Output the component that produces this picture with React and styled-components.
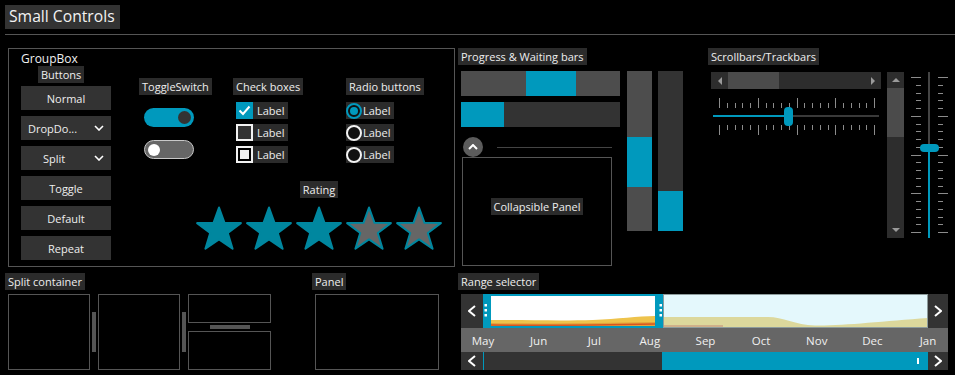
import styled, { createGlobalStyle } from 'styled-components';

const TEAL = '#0099bd';
const STAR = '#00879f';

const GlobalStyle = createGlobalStyle`
  html, body { margin: 0; padding: 0; background: #000; }
  body {
    font-family: "Open Sans", "Noto Sans", sans-serif;
    font-size: 11px;
    color: #eee;
  }
`;

const Page = styled.div`
  width: 955px;
  height: 375px;
  overflow: hidden;
  background: #000;
`;

const Header = styled.header`
  display: flex;
  padding: 5px 0 0 5px;
`;

const Title = styled.h1`
  margin: 0;
  height: 24px;
  line-height: 23px;
  padding: 0 5px 0 4px;
  font-size: 15.7px;
  font-weight: 400;
  background: #333;
  color: #f2f2f2;
`;

const Rule = styled.div`
  margin: 5px 0 0 5px;
  height: 1px;
  background: #555;
`;

const Row = styled.div`
  display: flex;
  align-items: flex-start;
  margin-top: ${(p) => p.$mt}px;
  height: ${(p) => (p.$h ? `${p.$h}px` : 'auto')};
`;

const Section = styled.section`
  display: flex;
  flex-direction: column;
  margin-left: ${(p) => p.$ml}px;
  width: ${(p) => (p.$w ? `${p.$w}px` : 'auto')};
`;

const Caption = styled.span`
  align-self: ${(p) => (p.$center ? 'center' : 'flex-start')};
  height: 17px;
  line-height: 17px;
  padding: 0 3px;
  margin-left: ${(p) => p.$indent || 0}px;
  background: #2b2b2b;
  color: #eee;
  font-size: 11px;
  white-space: nowrap;
`;

/* ---------- group box ---------- */

const GroupBox = styled.fieldset`
  box-sizing: border-box;
  display: flex;
  flex-direction: column;
  width: 447px;
  height: 219px;
  margin: 0 0 0 8px;
  padding: 2px 0 0 12px;
  border: 1px solid #555;
  min-width: 0;
`;

const GroupTitle = styled.div`
  height: 15px;
  line-height: 15px;
  font-size: 12px;
  color: #f0f0f0;
`;

const GroupBody = styled.div`
  display: flex;
`;

const ButtonsCol = styled.div`
  display: flex;
  flex-direction: column;
  width: 90px;
`;

const ButtonStack = styled.div`
  display: flex;
  flex-direction: column;
  gap: 6px;
  margin-top: 3px;
`;

const Button = styled.button`
  display: flex;
  align-items: center;
  justify-content: ${(p) => p.$justify || 'center'};
  height: 24px;
  padding: ${(p) => (p.$pad ? '0 7px' : '0')};
  border: none;
  background: #333;
  color: #eee;
  font-family: inherit;
  font-size: 11px;
`;

const SplitMain = styled.span`
  flex: 1;
  text-align: center;
`;

const SplitArrow = styled.span`
  display: flex;
  justify-content: center;
  width: 24px;
`;

const Chevron = ({ dir = 'down', w = 10, h = 6, sw = 1.6 }) => {
  const pts = {
    down: `1,1 ${w / 2},${h - 1} ${w - 1},1`,
    up: `1,${h - 1} ${w / 2},1 ${w - 1},${h - 1}`,
    left: `${w - 1},1 1,${h / 2} ${w - 1},${h - 1}`,
    right: `1,1 ${w - 1},${h / 2} 1,${h - 1}`,
  }[dir];
  return (
    <svg width={w} height={h} viewBox={`0 0 ${w} ${h}`}>
      <polyline points={pts} fill="none" stroke="#fff" strokeWidth={sw} />
    </svg>
  );
};

const RightArea = styled.div`
  display: flex;
  flex-direction: column;
  margin-left: 28px;
`;

const Controls = styled.div`
  display: flex;
  margin-top: 12px;
`;

const ControlCol = styled.div`
  display: flex;
  flex-direction: column;
  width: ${(p) => (p.$w ? `${p.$w}px` : 'auto')};
`;

const ToggleStack = styled.div`
  display: flex;
  flex-direction: column;
  gap: 13px;
  margin: 13px 0 0 5px;
`;

const Toggle = styled.div`
  box-sizing: border-box;
  display: flex;
  align-items: center;
  justify-content: ${(p) => (p.$on ? 'flex-end' : 'flex-start')};
  width: 50px;
  height: 19px;
  padding: 0 3px;
  border-radius: 10px;
  background: ${(p) => (p.$on ? TEAL : '#666')};
  border: ${(p) => (p.$on ? 'none' : '1.5px solid #c8c8c8')};
`;

const Knob = styled.span`
  width: ${(p) => (p.$on ? 13 : 12)}px;
  height: ${(p) => (p.$on ? 13 : 12)}px;
  border-radius: 50%;
  background: ${(p) => (p.$on ? '#333' : '#fff')};
`;

const ItemStack = styled.div`
  display: flex;
  flex-direction: column;
  align-items: flex-start;
  gap: 5px;
  margin: 7px 0 0 ${(p) => p.$ml || 0}px;
`;

const Item = styled.label`
  display: flex;
  align-items: center;
  gap: ${(p) => p.$gap}px;
  height: 17px;
  padding-right: 3px;
  background: #2b2b2b;
  color: #eee;
  font-size: 11px;
`;

const CheckBox = styled.span`
  box-sizing: border-box;
  display: flex;
  align-items: center;
  justify-content: center;
  width: 17px;
  height: 17px;
  background: ${(p) => (p.$state === 'on' ? TEAL : '#333')};
  border: ${(p) => (p.$state === 'on' ? 'none' : '2px solid #f2f2f2')};
`;

const Indeterminate = styled.span`
  width: 9px;
  height: 9px;
  background: #f2f2f2;
  outline: 2px solid #000;
`;

const Radio = styled.span`
  box-sizing: border-box;
  display: flex;
  align-items: center;
  justify-content: center;
  width: 16px;
  height: 16px;
  border-radius: 50%;
  border: 2px solid ${(p) => (p.$on ? TEAL : '#f2f2f2')};
  background: #111;
`;

const RadioDot = styled.span`
  width: 8px;
  height: 8px;
  border-radius: 50%;
  background: ${TEAL};
`;

const Rating = styled.div`
  display: flex;
  flex-direction: column;
  align-items: center;
  width: 246px;
  margin: 18px 0 0 57px;
`;

const Stars = styled.div`
  display: flex;
  gap: 2px;
  margin-top: 8px;
`;

const Star = ({ filled }) => (
  <svg width="48" height="45" viewBox="0 0 48 45">
    <polygon
      points="24,1.5 29.5,16.8 45.9,17.1 32.8,27 37.6,42.8 24,33.4 10.4,42.8 15.2,27 2.1,17.1 18.5,16.8"
      fill={filled ? STAR : '#666'}
      stroke={STAR}
      strokeWidth="2"
      strokeLinejoin="round"
    />
  </svg>
);

/* ---------- progress ---------- */

const SectionBody = styled.div`
  display: flex;
  margin: ${(p) => p.$mt}px 0 0 3px;
`;

const ProgressCol = styled.div`
  display: flex;
  flex-direction: column;
  width: 159px;
`;

const Bar = styled.div`
  display: flex;
  width: 159px;
  height: 25px;
  margin-bottom: 6px;
  background: ${(p) => p.$bg};
`;

const BarFill = styled.div`
  width: ${(p) => p.$w}px;
  margin-left: ${(p) => p.$off || 0}px;
  background: ${TEAL};
`;

const CollapseRow = styled.div`
  display: flex;
  align-items: center;
  width: 151px;
  height: 20px;
  margin-top: 4px;
`;

const CircleBtn = styled.span`
  display: flex;
  align-items: center;
  justify-content: center;
  width: 20px;
  height: 20px;
  margin-left: 2px;
  border-radius: 50%;
  background: #5c5c5c;
`;

const CollapseLine = styled.span`
  flex: 1;
  height: 1px;
  margin-left: 14px;
  background: #444;
`;

const CollapsePanel = styled.div`
  box-sizing: border-box;
  display: flex;
  align-items: center;
  justify-content: center;
  width: 150px;
  height: 109px;
  margin-left: 1px;
  padding-bottom: 10px;
  border: 1px solid #555;
`;

const VBars = styled.div`
  display: flex;
  gap: 6px;
  margin-left: 7px;
`;

const VBar = styled.div`
  display: flex;
  flex-direction: column;
  width: 25px;
  height: 160px;
  background: ${(p) => p.$bg};
`;

const VFill = styled.div`
  height: ${(p) => p.$h}px;
  margin-top: ${(p) => p.$off}px;
  background: ${TEAL};
`;

/* ---------- scrollbars & trackbars ---------- */

const TrackCol = styled.div`
  display: flex;
  flex-direction: column;
  width: 170px;
`;

const HScroll = styled.div`
  display: flex;
  height: 17px;
  background: #2d2d2d;
`;

const VScroll = styled.div`
  display: flex;
  flex-direction: column;
  width: 17px;
  height: 166px;
  margin-left: 6px;
  background: #2d2d2d;
`;

const ArrowBox = styled.span`
  display: flex;
  align-items: center;
  justify-content: center;
  flex: 0 0 ${(p) => p.$size}px;
`;

const Tri = styled.span`
  width: 0;
  height: 0;
  border: 4px solid transparent;
  ${(p) => (p.$dir === 'left' ? 'border-right: 4px solid #9a9a9a; border-left-width: 0;' : '')}
  ${(p) => (p.$dir === 'right' ? 'border-left: 4px solid #9a9a9a; border-right-width: 0;' : '')}
  ${(p) => (p.$dir === 'up' ? 'border-bottom: 4px solid #9a9a9a; border-top-width: 0;' : '')}
  ${(p) => (p.$dir === 'down' ? 'border-top: 4px solid #9a9a9a; border-bottom-width: 0;' : '')}
`;

const ScrollThumb = styled.span`
  flex: 0 0 ${(p) => p.$size}px;
  background: #4b4b4b;
`;

const Spacer = styled.span`
  flex: 1;
`;

const HTrack = styled.div`
  position: relative;
  height: 40px;
  margin-top: 7px;
`;

const TickRow = styled.div`
  display: flex;
  justify-content: space-between;
  align-items: ${(p) => (p.$bottom ? 'flex-start' : 'flex-end')};
  height: 10px;
  margin: ${(p) => (p.$bottom ? 8 : 2)}px 6px 0 8px;
`;

const HTick = styled.span`
  width: 1px;
  height: ${(p) => (p.$major ? 10 : 5)}px;
  background: #8c8c8c;
`;

const HLine = styled.div`
  height: 2px;
  margin: 7px 2px 0;
  background: linear-gradient(to right, ${TEAL} 0 ${(p) => p.$value}px, #3a3a3a ${(p) => p.$value}px);
`;

const HThumb = styled.span`
  position: absolute;
  left: 73px;
  top: 11px;
  width: 9px;
  height: 19px;
  border-radius: 4px;
  background: ${TEAL};
`;

const VTrack = styled.div`
  position: relative;
  display: flex;
  width: 42px;
  height: 166px;
  margin-left: 5px;
`;

const TickCol = styled.div`
  display: flex;
  flex-direction: column;
  justify-content: space-between;
  align-items: ${(p) => (p.$right ? 'flex-start' : 'flex-end')};
  width: 10px;
  padding: 5px 0;
  margin-left: ${(p) => (p.$right ? 8 : 2)}px;
`;

const VTick = styled.span`
  height: 1px;
  width: ${(p) => (p.$major ? 10 : 5)}px;
  background: #8c8c8c;
`;

const VLine = styled.div`
  width: 2px;
  margin-left: 7px;
  background: linear-gradient(to bottom, #444 0 ${(p) => p.$value}px, ${TEAL} ${(p) => p.$value}px);
`;

const VThumb = styled.span`
  position: absolute;
  left: 11px;
  top: 72px;
  width: 19px;
  height: 8px;
  border-radius: 4px;
  background: ${TEAL};
`;

const ticks = Array.from({ length: 21 }, (_, i) => i % 5 === 0);

/* ---------- bottom row ---------- */

const PaneRow = styled.div`
  display: flex;
  margin: 4px 0 0 3px;
`;

const Pane = styled.div`
  box-sizing: border-box;
  width: ${(p) => p.$w}px;
  height: ${(p) => p.$h}px;
  border: 1px solid #555;
`;

const VSplitter = styled.span`
  align-self: center;
  width: 4px;
  height: 40px;
  margin: 0 2px;
  background: #555;
`;

const PaneStack = styled.div`
  display: flex;
  flex-direction: column;
  align-items: center;
`;

const HSplitter = styled.span`
  width: 40px;
  height: 4px;
  margin: 2px 0;
  background: #555;
`;

const RangeBox = styled.div`
  display: flex;
  flex-direction: column;
  width: 487px;
  margin: 4px 0 0 3px;
`;

const RangeLine = styled.div`
  display: flex;
  height: ${(p) => p.$h}px;
`;

const NavBtn = styled.span`
  display: flex;
  align-items: center;
  justify-content: center;
  flex: 0 0 ${(p) => p.$w}px;
  background: #333;
`;

const MonthRow = styled.div`
  display: flex;
  height: 24px;
  padding: 0 20px 0 22px;
  background: #666;
`;

const MonthTrack = styled.div`
  flex: 1;
  display: flex;
  align-items: center;
  justify-content: space-between;
`;

const Month = styled.span`
  display: flex;
  justify-content: center;
  width: 0;
  white-space: nowrap;
  font-size: 11.5px;
  color: #f0f0f0;
`;

const RangeTrack = styled.div`
  display: flex;
  flex: 0 0 445px;
  box-sizing: border-box;
  border-left: 1px solid ${TEAL};
  background: #333;
`;

const RangeFill = styled.div`
  position: relative;
  margin-left: 178px;
  flex: 1;
  background: ${TEAL};
`;

const RangeMark = styled.span`
  position: absolute;
  left: 255px;
  top: 6px;
  width: 2px;
  height: 6px;
  background: #fff;
`;

const RangeChart = () => (
  <svg width="445" height="34" viewBox="0 0 445 34" style={{ display: 'block' }}>
    <rect x="0" y="0" width="445" height="34" fill="#e4f8fc" />
    <path
      d="M180,34 L180,23 L285,23 C300,23 312,31 332,31.5 C360,32 400,27 445,24 L445,34 Z"
      fill="#dcd89c"
    />
    <rect x="180" y="31" width="60" height="3" fill="#cfb08a" />
    <rect x="180.5" y="0.5" width="264" height="33" fill="none" stroke="#8d9c9c" />
    <rect x="0" y="0" width="180" height="34" fill="#fff" />
    <path
      d="M8,34 L8,26 C40,26 80,27 110,26 C135,25 155,22 172,22 L172,34 Z"
      fill="#eec34c"
    />
    <path d="M8,34 L8,29 C60,30 120,29 172,28 L172,34 Z" fill="#e3a33a" />
    <path d="M8,31 C60,31.5 120,31 172,30" fill="none" stroke="#da5520" strokeWidth="1.5" />
    <rect x="0" y="0" width="180" height="2" fill={TEAL} />
    <rect x="0" y="32" width="180" height="2" fill={TEAL} />
    <rect x="0" y="1" width="8" height="32" fill={TEAL} />
    <rect x="172" y="1" width="8" height="32" fill={TEAL} />
    {[11, 16, 21].map((y) => (
      <g key={y} fill="#fff">
        <rect x="1.5" y={y - 1} width="2.5" height="2.5" />
        <rect x="176.5" y={y - 1} width="2.5" height="2.5" />
      </g>
    ))}
  </svg>
);

const months = ['May', 'Jun', 'Jul', 'Aug', 'Sep', 'Oct', 'Nov', 'Dec', 'Jan'];

export default function App() {
  return (
    <>
      <GlobalStyle />
      <Page>
        <Header>
          <Title>Small Controls</Title>
        </Header>
        <Rule />

        <Row $mt={13} $h={219}>
          <GroupBox>
            <GroupTitle>GroupBox</GroupTitle>
            <GroupBody>
              <ButtonsCol>
                <Caption $indent={17}>Buttons</Caption>
                <ButtonStack>
                  <Button>Normal</Button>
                  <Button $justify="space-between" $pad>
                    DropDo...
                    <Chevron />
                  </Button>
                  <Button>
                    <SplitMain>Split</SplitMain>
                    <SplitArrow>
                      <Chevron />
                    </SplitArrow>
                  </Button>
                  <Button>Toggle</Button>
                  <Button>Default</Button>
                  <Button>Repeat</Button>
                </ButtonStack>
              </ButtonsCol>

              <RightArea>
                <Controls>
                  <ControlCol $w={94}>
                    <Caption>ToggleSwitch</Caption>
                    <ToggleStack>
                      <Toggle $on>
                        <Knob $on />
                      </Toggle>
                      <Toggle>
                        <Knob />
                      </Toggle>
                    </ToggleStack>
                  </ControlCol>

                  <ControlCol $w={113}>
                    <Caption>Check boxes</Caption>
                    <ItemStack $ml={3}>
                      <Item $gap={4}>
                        <CheckBox $state="on">
                          <svg width="13" height="11" viewBox="0 0 13 11">
                            <polyline points="1.5,5.5 5,9 11.5,1.5" fill="none" stroke="#fff" strokeWidth="2" />
                          </svg>
                        </CheckBox>
                        Label
                      </Item>
                      <Item $gap={4}>
                        <CheckBox $state="off" />
                        Label
                      </Item>
                      <Item $gap={4}>
                        <CheckBox $state="mixed">
                          <Indeterminate />
                        </CheckBox>
                        Label
                      </Item>
                    </ItemStack>
                  </ControlCol>

                  <ControlCol>
                    <Caption>Radio buttons</Caption>
                    <ItemStack>
                      <Item $gap={1}>
                        <Radio $on>
                          <RadioDot />
                        </Radio>
                        Label
                      </Item>
                      <Item $gap={1}>
                        <Radio />
                        Label
                      </Item>
                      <Item $gap={1}>
                        <Radio />
                        Label
                      </Item>
                    </ItemStack>
                  </ControlCol>
                </Controls>

                <Rating>
                  <Caption $center>Rating</Caption>
                  <Stars>
                    {[1, 2, 3, 4, 5].map((n) => (
                      <Star key={n} filled={n <= 3} />
                    ))}
                  </Stars>
                </Rating>
              </RightArea>
            </GroupBody>
          </GroupBox>

          <Section $ml={3} $w={245}>
            <Caption>Progress &amp; Waiting bars</Caption>
            <SectionBody $mt={6}>
              <ProgressCol>
                <Bar $bg="#4d4d4d">
                  <BarFill $off={65} $w={50} />
                </Bar>
                <Bar $bg="#333">
                  <BarFill $w={43} />
                </Bar>
                <CollapseRow>
                  <CircleBtn>
                    <Chevron dir="up" w={10} h={6} sw={2} />
                  </CircleBtn>
                  <CollapseLine />
                </CollapseRow>
                <CollapsePanel>
                  <Caption $center>Collapsible Panel</Caption>
                </CollapsePanel>
              </ProgressCol>
              <VBars>
                <VBar $bg="#4d4d4d">
                  <VFill $off={66} $h={50} />
                </VBar>
                <VBar $bg="#333">
                  <VFill $off={120} $h={40} />
                </VBar>
              </VBars>
            </SectionBody>
          </Section>

          <Section $ml={5}>
            <Caption>Scrollbars/Trackbars</Caption>
            <SectionBody $mt={7}>
              <TrackCol>
                <HScroll>
                  <ArrowBox $size={17}>
                    <Tri $dir="left" />
                  </ArrowBox>
                  <ScrollThumb $size={51} />
                  <Spacer />
                  <ArrowBox $size={17}>
                    <Tri $dir="right" />
                  </ArrowBox>
                </HScroll>
                <HTrack>
                  <TickRow>
                    {ticks.map((m, i) => (
                      <HTick key={i} $major={m} />
                    ))}
                  </TickRow>
                  <HLine $value={75} />
                  <TickRow $bottom>
                    {ticks.map((m, i) => (
                      <HTick key={i} $major={m} />
                    ))}
                  </TickRow>
                  <HThumb />
                </HTrack>
              </TrackCol>

              <VScroll>
                <ArrowBox $size={16}>
                  <Tri $dir="up" />
                </ArrowBox>
                <ScrollThumb $size={49} />
                <Spacer />
                <ArrowBox $size={16}>
                  <Tri $dir="down" />
                </ArrowBox>
              </VScroll>

              <VTrack>
                <TickCol>
                  {ticks.map((m, i) => (
                    <VTick key={i} $major={m} />
                  ))}
                </TickCol>
                <VLine $value={76} />
                <TickCol $right>
                  {ticks.map((m, i) => (
                    <VTick key={i} $major={m} />
                  ))}
                </TickCol>
                <VThumb />
              </VTrack>
            </SectionBody>
          </Section>
        </Row>

        <Row $mt={6}>
          <Section $ml={5}>
            <Caption>Split container</Caption>
            <PaneRow>
              <Pane $w={82} $h={76} />
              <VSplitter />
              <Pane $w={82} $h={76} />
              <VSplitter />
              <PaneStack>
                <Pane $w={83} $h={29} />
                <HSplitter />
                <Pane $w={83} $h={39} />
              </PaneStack>
            </PaneRow>
          </Section>

          <Section $ml={41}>
            <Caption>Panel</Caption>
            <PaneRow>
              <Pane $w={124} $h={76} />
            </PaneRow>
          </Section>

          <Section $ml={19}>
            <Caption>Range selector</Caption>
            <RangeBox>
              <RangeLine $h={34}>
                <NavBtn $w={22}>
                  <Chevron dir="left" w={8} h={12} sw={2} />
                </NavBtn>
                <RangeChart />
                <NavBtn $w={20}>
                  <Chevron dir="right" w={8} h={12} sw={2} />
                </NavBtn>
              </RangeLine>
              <MonthRow>
                <MonthTrack>
                  {months.map((m) => (
                    <Month key={m}>{m}</Month>
                  ))}
                </MonthTrack>
              </MonthRow>
              <RangeLine $h={18}>
                <NavBtn $w={22}>
                  <Chevron dir="left" w={8} h={12} sw={2} />
                </NavBtn>
                <RangeTrack>
                  <RangeFill>
                    <RangeMark />
                  </RangeFill>
                </RangeTrack>
                <NavBtn $w={20}>
                  <Chevron dir="right" w={8} h={12} sw={2} />
                </NavBtn>
              </RangeLine>
            </RangeBox>
          </Section>
        </Row>
      </Page>
    </>
  );
}
